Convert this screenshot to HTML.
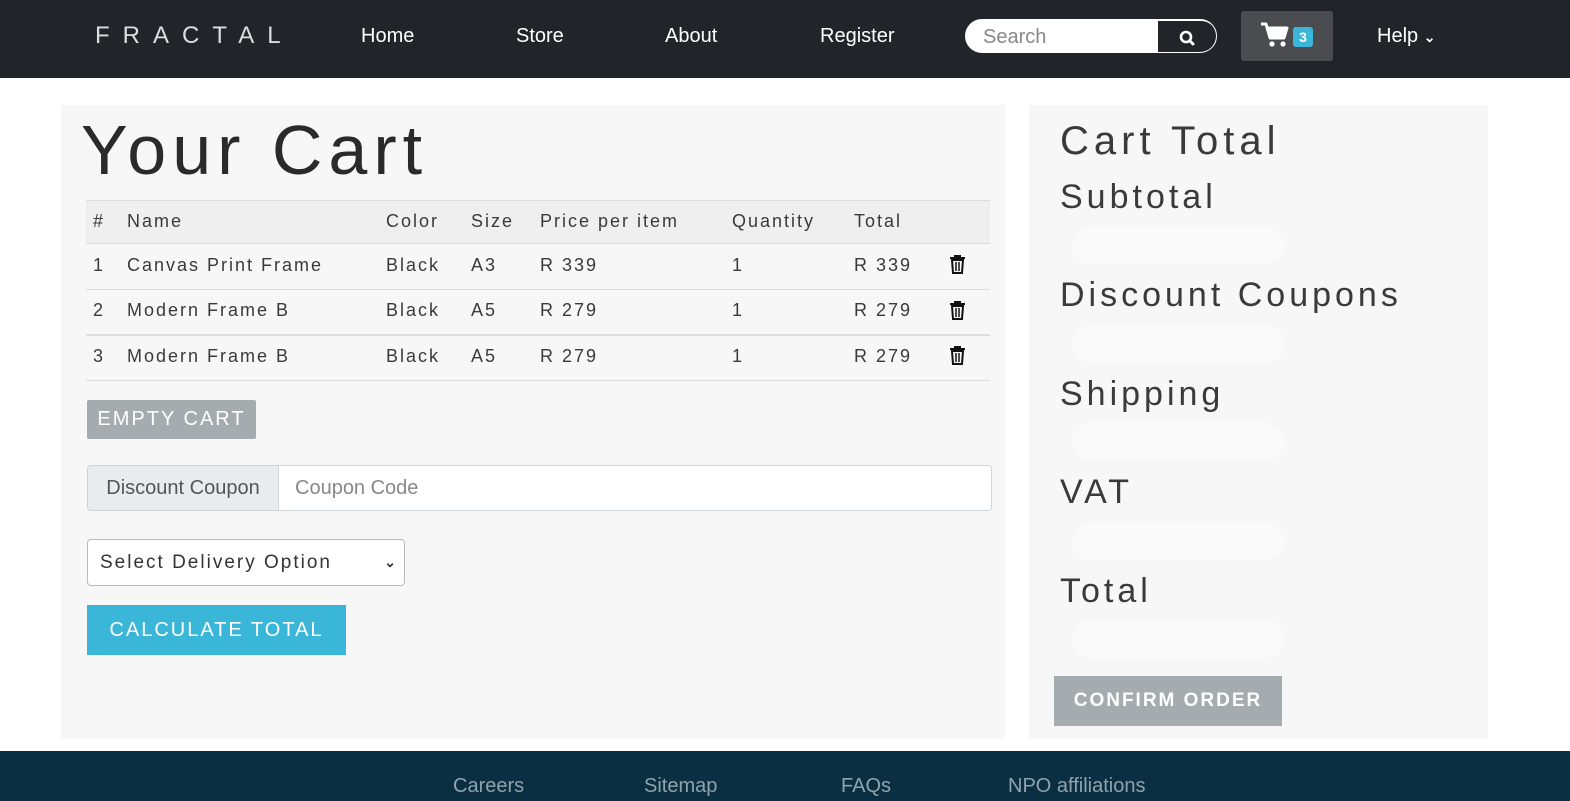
<!DOCTYPE html>
<html><head><meta charset="utf-8"><style>
*{box-sizing:border-box;margin:0;padding:0}
body{width:1570px;height:801px;overflow:hidden;background:#fff;font-family:"Liberation Sans",sans-serif;position:relative;color:#212529}
.nav{position:absolute;left:0;top:0;width:1570px;height:78px;background:#212529;color:#fff}
.nav .a{position:absolute;top:25px;font-size:20px;font-weight:300}
.logo{position:absolute;left:95px;top:22px;font-size:24px;letter-spacing:13px;font-weight:300;color:#ddd}
.search{position:absolute;left:965px;top:19px;width:252px;height:34px;border:1px solid #fff;border-radius:17px;overflow:hidden;background:#fff}
.search span{position:absolute;left:17px;top:6px;font-size:20px;color:#888}
.search .b{position:absolute;left:192px;top:0;width:60px;height:34px;background:#212529;border:1px solid #fff;border-left:none;border-radius:0 17px 17px 0}
.cart{position:absolute;left:1241px;top:11px;width:92px;height:50px;background:#4a4c4f;border-radius:3px}
.badge{position:absolute;left:52px;top:16px;width:20px;height:20px;background:#3ab7d8;border-radius:3px;font-size:14px;font-weight:bold;text-align:center;line-height:20px}
.p{position:absolute;background:#f7f7f7}
.t{position:absolute;font-size:18px;letter-spacing:2px;color:#3a3a3a}
.line{position:absolute;left:86px;width:904px;height:1px;background:#ddd}
.pill{position:absolute;left:1072px;width:212px;height:38px;border-radius:19px;background:#fafafa}
.h{position:absolute;left:1060px;font-size:34px;letter-spacing:4px;font-weight:300;color:#3a3a3a}
.footer{position:absolute;left:0;top:751px;width:1570px;height:50px;background:#0b2f42;color:#8fa3ad;font-size:20px}
.footer span{position:absolute;top:24px}
</style></head><body>
<div class="nav">
<div class="logo">FRACTAL</div>
<div class="a" style="left:361px">Home</div>
<div class="a" style="left:516px">Store</div>
<div class="a" style="left:665px">About</div>
<div class="a" style="left:820px">Register</div>
<div class="search"><span>Search</span><div class="b"><svg width="60" height="34" viewBox="0 0 60 34"><circle cx="28" cy="16" r="5" fill="none" stroke="#fff" stroke-width="2.6"/><line x1="32" y1="20" x2="35" y2="23" stroke="#fff" stroke-width="3" stroke-linecap="round"/></svg></div></div>
<div class="cart"><svg style="position:absolute;left:20px;top:11px" width="28" height="26" viewBox="0 0 28 26"><path d="M0 2h5l4 14h14l3-10H7" fill="none" stroke="#fff" stroke-width="3" stroke-linejoin="round"/><path d="M7 6h19l-3 10H10z" fill="#fff"/><circle cx="11" cy="22" r="2.6" fill="#fff"/><circle cx="22" cy="22" r="2.6" fill="#fff"/></svg><div class="badge">3</div></div>
<div class="a" style="left:1377px">Help <span style="font-size:14px;font-weight:bold">&#8964;</span></div>
</div>

<div class="p" style="left:61px;top:105px;width:944px;height:634px"></div>
<div class="p" style="left:1029px;top:105px;width:459px;height:634px"></div>

<div style="position:absolute;left:81px;top:110px;font-size:70px;font-weight:300;letter-spacing:6px;color:#2a2a2a">Your Cart</div>
<div style="position:absolute;left:86px;top:200px;width:904px;height:43px;background:#efefef"></div>
<div class="line" style="top:200px"></div><div class="line" style="top:243px"></div><div class="line" style="top:289px"></div><div class="line" style="top:334px;height:2px"></div><div class="line" style="top:380px"></div>
<div class="t" style="left:93px;top:211px">#</div><div class="t" style="left:127px;top:211px">Name</div><div class="t" style="left:386px;top:211px">Color</div><div class="t" style="left:471px;top:211px">Size</div><div class="t" style="left:540px;top:211px">Price per item</div><div class="t" style="left:732px;top:211px">Quantity</div><div class="t" style="left:854px;top:211px">Total</div>

<div class="t" style="left:93px;top:255px">1</div><div class="t" style="left:127px;top:255px">Canvas Print Frame</div><div class="t" style="left:386px;top:255px">Black</div><div class="t" style="left:471px;top:255px">A3</div><div class="t" style="left:540px;top:255px">R 339</div><div class="t" style="left:732px;top:255px">1</div><div class="t" style="left:854px;top:255px">R 339</div>
<div class="t" style="left:93px;top:300px">2</div><div class="t" style="left:127px;top:300px">Modern Frame B</div><div class="t" style="left:386px;top:300px">Black</div><div class="t" style="left:471px;top:300px">A5</div><div class="t" style="left:540px;top:300px">R 279</div><div class="t" style="left:732px;top:300px">1</div><div class="t" style="left:854px;top:300px">R 279</div>
<div class="t" style="left:93px;top:346px">3</div><div class="t" style="left:127px;top:346px">Modern Frame B</div><div class="t" style="left:386px;top:346px">Black</div><div class="t" style="left:471px;top:346px">A5</div><div class="t" style="left:540px;top:346px">R 279</div><div class="t" style="left:732px;top:346px">1</div><div class="t" style="left:854px;top:346px">R 279</div>
<svg style="position:absolute;left:949px;top:255px" width="17" height="19" viewBox="0 0 17 19"><path d="M1 3h15M6 3V1h5v2M3 5h11l-1 13H4z" fill="none" stroke="#111" stroke-width="2"/><path d="M7 7v9M10 7v9" stroke="#111" stroke-width="1.5"/></svg>
<svg style="position:absolute;left:949px;top:301px" width="17" height="19" viewBox="0 0 17 19"><path d="M1 3h15M6 3V1h5v2M3 5h11l-1 13H4z" fill="none" stroke="#111" stroke-width="2"/><path d="M7 7v9M10 7v9" stroke="#111" stroke-width="1.5"/></svg>
<svg style="position:absolute;left:949px;top:346px" width="17" height="19" viewBox="0 0 17 19"><path d="M1 3h15M6 3V1h5v2M3 5h11l-1 13H4z" fill="none" stroke="#111" stroke-width="2"/><path d="M7 7v9M10 7v9" stroke="#111" stroke-width="1.5"/></svg>

<div style="position:absolute;left:87px;top:400px;width:169px;height:39px;background:#a5acaf;color:#fff;font-size:20px;letter-spacing:2px;line-height:39px;text-align:center;border-radius:2px">EMPTY CART</div>
<div style="position:absolute;left:87px;top:465px;width:192px;height:46px;background:#e9ecef;border:1px solid #ced4da;border-radius:4px 0 0 4px;font-size:20px;color:#555;line-height:44px;text-align:center">Discount Coupon</div>
<div style="position:absolute;left:278px;top:465px;width:714px;height:46px;background:#fff;border:1px solid #ced4da;border-radius:0 4px 4px 0;font-size:20px;color:#888;line-height:44px;padding-left:16px">Coupon Code</div>
<div style="position:absolute;left:87px;top:539px;width:318px;height:47px;background:#fff;border:1px solid #bbb;border-radius:4px;font-size:19px;letter-spacing:2px;color:#333;line-height:45px;padding-left:12px">Select Delivery Option<span style="position:absolute;right:6px;top:0;font-size:14px;font-weight:bold">&#8964;</span></div>
<div style="position:absolute;left:87px;top:605px;width:259px;height:50px;background:#3ab7d8;color:#fff;font-size:20px;letter-spacing:2px;line-height:50px;text-align:center">CALCULATE TOTAL</div>

<div class="h" style="top:119px;font-size:40px;letter-spacing:5px">Cart Total</div>
<div class="h" style="top:178px">Subtotal</div><div class="pill" style="top:226px"></div>
<div class="h" style="top:276px">Discount Coupons</div><div class="pill" style="top:325px"></div>
<div class="h" style="top:375px">Shipping</div><div class="pill" style="top:423px"></div>
<div class="h" style="top:473px">VAT</div><div class="pill" style="top:522px"></div>
<div class="h" style="top:572px">Total</div><div class="pill" style="top:620px"></div>
<div style="position:absolute;left:1054px;top:676px;width:228px;height:50px;background:#a5acaf;color:#fff;font-size:19px;font-weight:bold;letter-spacing:2px;line-height:50px;text-align:center">CONFIRM ORDER</div>

<div class="footer"><span style="left:453px">Careers</span><span style="left:644px">Sitemap</span><span style="left:841px">FAQs</span><span style="left:1008px">NPO affiliations</span></div>
</body></html>
